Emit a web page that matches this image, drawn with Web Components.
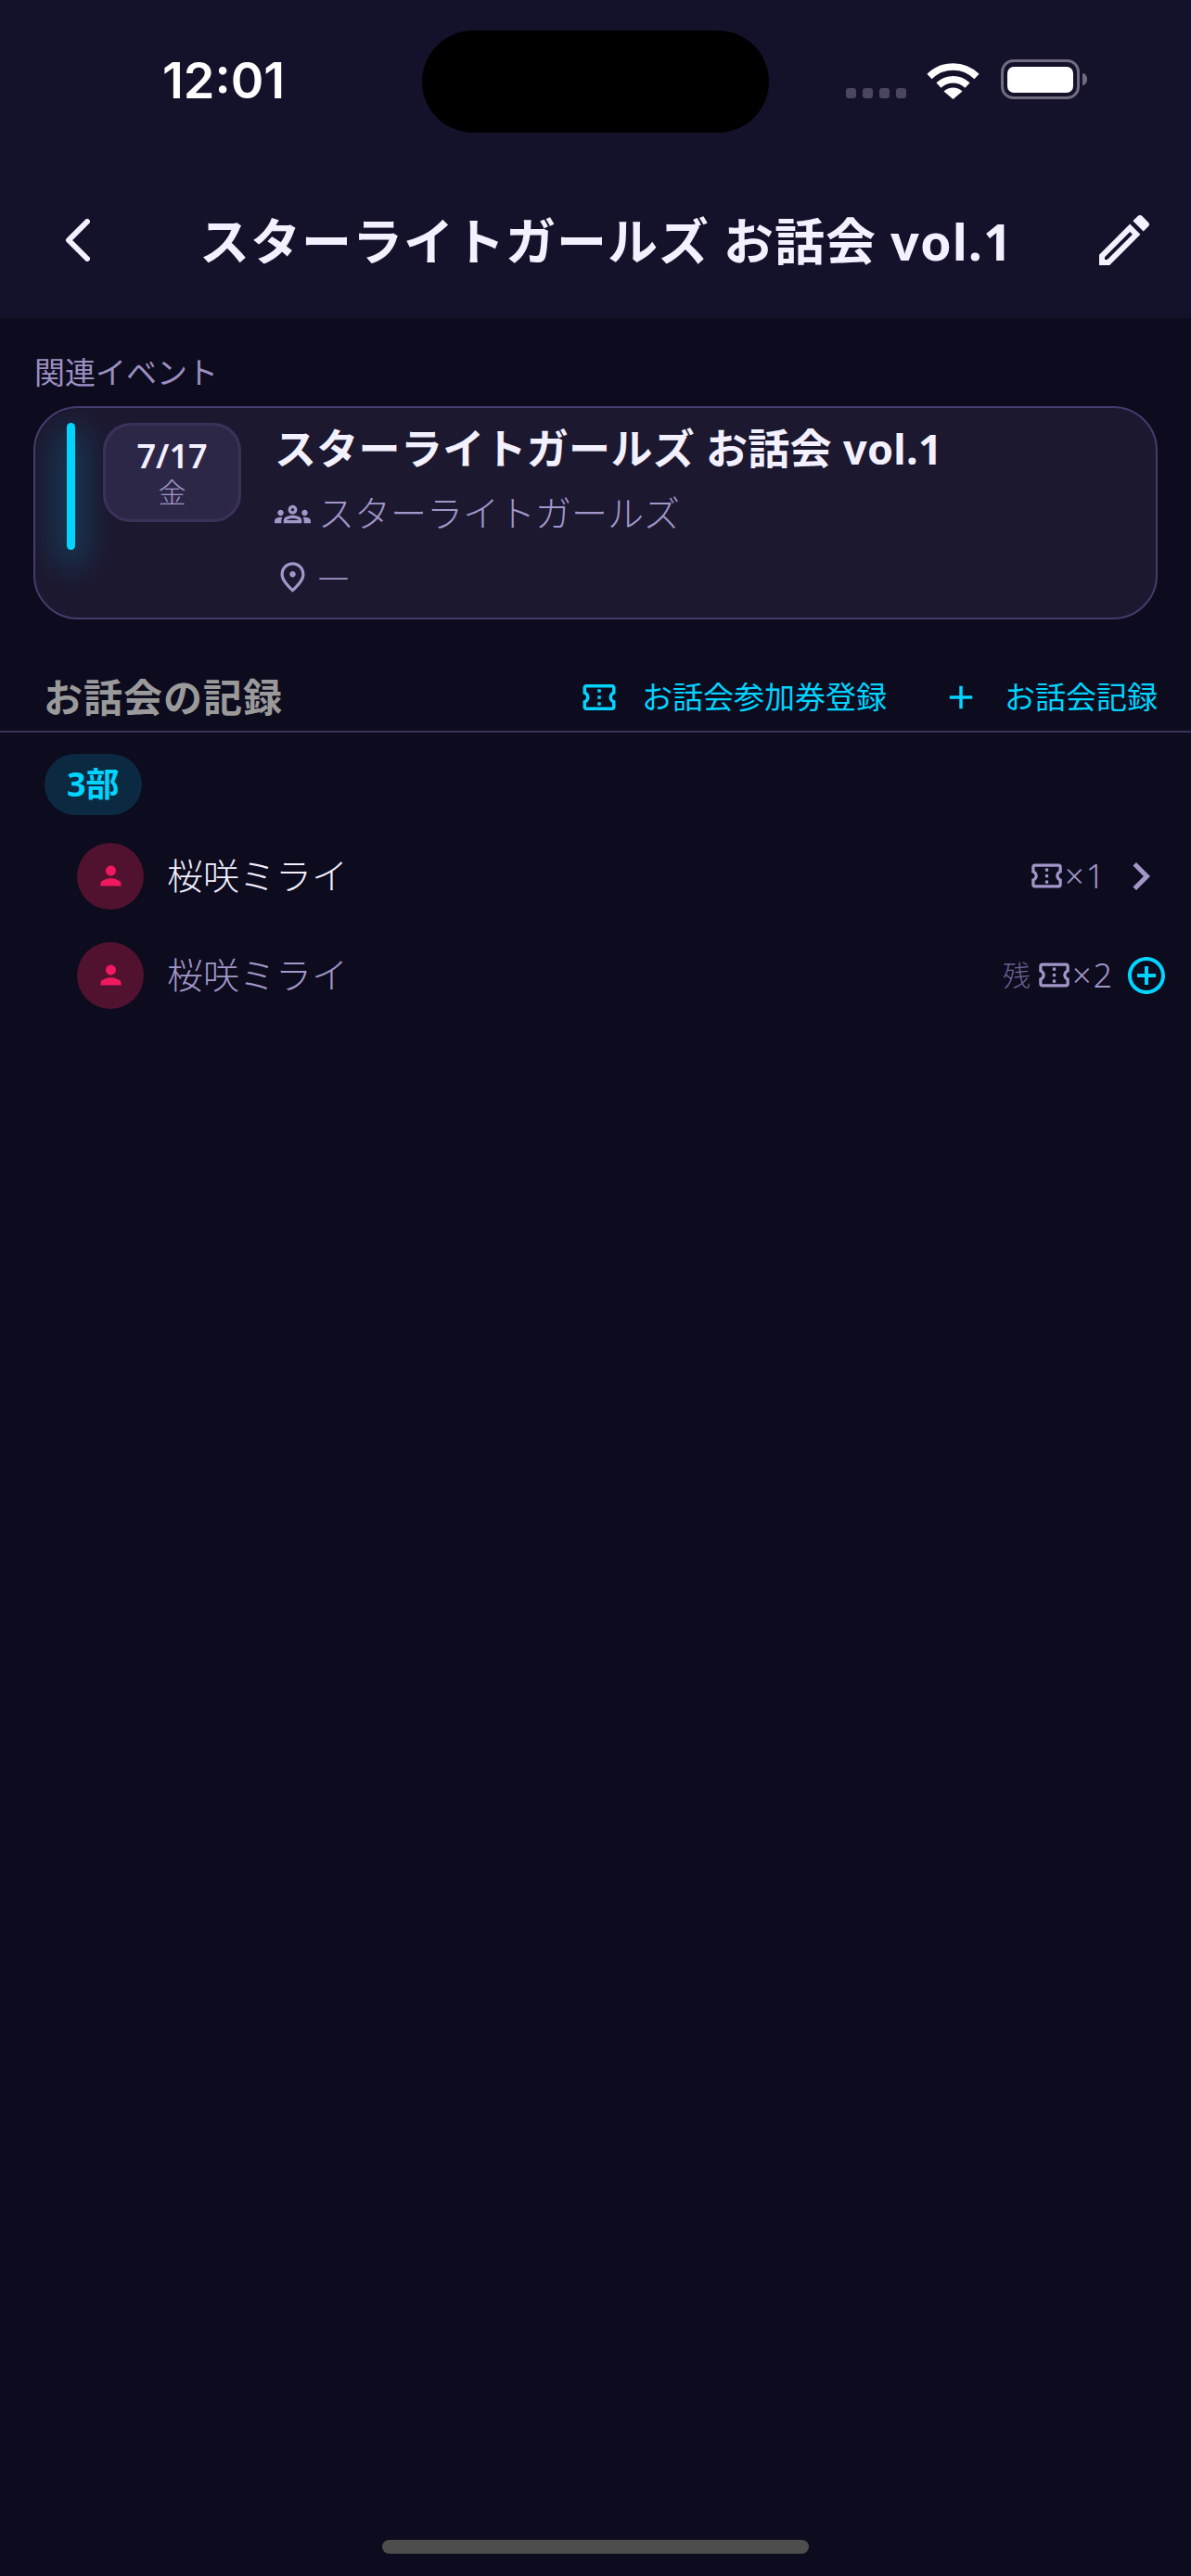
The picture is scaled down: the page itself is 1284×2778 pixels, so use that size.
<!DOCTYPE html>
<html lang="ja">
<head>
<meta charset="utf-8">
<title>スターライトガールズ お話会 vol.1</title>
<style>
    html, body
    {
        margin      : 0;
        padding     : 0;
        background  : #0d0b1e;
        font-family : "Noto Sans", "Noto Sans CJK JP", sans-serif;
    }
</style>
</head>
<body>

<screen-page>
    <status-bar time="12:01"></status-bar>
    <nav-header>スターライトガールズ お話会 vol.1</nav-header>

    <section-label>関連イベント</section-label>
    <event-card date="7/17" weekday="金">
        <span slot="title">スターライトガールズ お話会 vol.1</span>
        <span slot="artist">スターライトガールズ</span>
        <span slot="place">—</span>
    </event-card>

    <record-header heading="お話会の記録">
        <action-link icon="ticket" gap="25">お話会参加券登録</action-link>
        <action-link icon="add" gap="26" style="margin-left:59px">お話会記録</action-link>
    </record-header>

    <part-badge>3部</part-badge>
    <record-row name="桜咲ミライ" count="×1" mode="done"></record-row>
    <record-row name="桜咲ミライ" count="×2" mode="left"></record-row>

    <home-indicator></home-indicator>
</screen-page>

<script>
const ICONS =
{
    ticket : "M22 10V6c0-1.11-.9-2-2-2H4c-1.1 0-1.99.89-1.99 2v4c1.1 0 1.99.9 1.99 2s-.89 2-2 2v4c0 1.1.9 2 2 2h16c1.1 0 2-.9 2-2v-4c-1.1 0-2-.9-2-2s.9-2 2-2zm-2-1.46c-1.19.69-2 1.99-2 3.46s.81 2.77 2 3.46V18H4v-2.54c1.19-.69 2-1.99 2-3.46 0-1.48-.8-2.77-1.99-3.46L4 6h16v2.54zM11 15h2v2h-2zm0-4h2v2h-2zm0-4h2v2h-2z",
    add    : "M19 13h-6v6h-2v-6H5v-2h6V5h2v6h6v2z",
    edit   : "M14.06 9.02l.92.92L5.92 19H5v-.92l9.06-9.06M17.66 3c-.25 0-.51.1-.7.29l-1.83 1.83 3.75 3.75 1.83-1.83c.39-.39.39-1.02 0-1.41l-2.34-2.34c-.2-.2-.45-.29-.71-.29zm-3.6 3.19L3 17.25V21h3.75L17.81 9.94l-3.75-3.75z",
    person : "M12 12c2.21 0 4-1.79 4-4s-1.79-4-4-4-4 1.79-4 4 1.79 4 4 4zm0 2c-2.67 0-8 1.34-8 4v2h16v-2c0-2.66-5.33-4-8-4z",
    place  : "M12 12c-1.1 0-2-.9-2-2s.9-2 2-2 2 .9 2 2-.9 2-2 2zm6-1.8C18 6.57 15.35 4 12 4s-6 2.57-6 6.2c0 2.34 1.95 5.44 6 9.14 4.05-3.7 6-6.8 6-9.14zM12 2c4.2 0 8 3.22 8 8.2 0 3.32-2.67 7.25-8 11.8-5.33-4.55-8-8.48-8-11.8C4 5.22 7.8 2 12 2z",
    groups : "M4,13c1.1,0,2-0.9,2-2c0-1.1-0.9-2-2-2s-2,0.9-2,2C2,12.1,2.9,13,4,13z M5.13,14.1C4.76,14.04,4.39,14,4,14c-0.99,0-1.93,0.21-2.78,0.58C0.48,14.9,0,15.62,0,16.43V18l4.5,0v-1.61C4.5,15.56,4.73,14.78,5.13,14.1z M20,13c1.1,0,2-0.9,2-2c0-1.1-0.9-2-2-2s-2,0.9-2,2C18,12.1,18.9,13,20,13z M24,16.43c0-0.81-0.48-1.53-1.22-1.85C21.93,14.21,20.99,14,20,14c-0.39,0-0.76,0.04-1.13,0.1c0.4,0.68,0.63,1.46,0.63,2.29V18l4.5,0V16.43z M16.24,13.65c-1.17-0.52-2.61-0.9-4.24-0.9c-1.63,0-3.07,0.39-4.24,0.9C6.68,14.13,6,15.21,6,16.39V18h12v-1.61C18,15.21,17.32,14.13,16.24,13.65z M8.07,16c0.09-0.23,0.13-0.39,0.91-0.69c0.97-0.38,1.99-0.56,3.02-0.56s2.05,0.18,3.02,0.56c0.77,0.3,0.81,0.46,0.91,0.69H8.07z M12,8c0.55,0,1,0.45,1,1s-0.45,1-1,1s-1-0.45-1-1S11.45,8,12,8 M12,6c-1.66,0-3,1.34-3,3c0,1.66,1.34,3,3,3s3-1.34,3-3C15,7.34,13.66,6,12,6L12,6z",
    chevron: "M10 6L8.59 7.41 13.17 12l-4.58 4.59L10 18l6-6z",
    circle : "M13 7h-2v4H7v2h4v4h2v-4h4v-2h-4V7zm-1-5C6.48 2 2 6.48 2 12s4.48 10 10 10 10-4.48 10-10S17.52 2 12 2zm0 18c-4.41 0-8-3.59-8-8s3.59-8 8-8 8 3.59 8 8-3.59 8-8 8z"
};

class AppIcon extends HTMLElement
{
    connectedCallback()
    {
        const size = this.getAttribute("size") || 24;
        this.attachShadow({mode:"open"}).innerHTML =
        `
        <style>
            :host { display:block; flex:none; width:${size}px; height:${size}px; }
            svg   { display:block; width:100%; height:100%; fill:currentColor; }
        </style>
        <svg viewBox="0 0 24 24"><path d="${ICONS[this.getAttribute("name")]}"/></svg>`;
    }
}

class ScreenPage extends HTMLElement
{
    constructor()
    {
        super();
        this.attachShadow({mode:"open"}).innerHTML =
        `
        <style>
            :host
            {
                display        : flex;
                flex-direction : column;
                height         : 2778px;
                background     : #0d0b1e;
                overflow       : hidden;
            }
        </style>
        <slot></slot>`;
    }
}

class StatusBar extends HTMLElement
{
    connectedCallback()
    {
        this.attachShadow({mode:"open"}).innerHTML =
        `
        <style>
            :host
            {
                display               : grid;
                grid-template-columns : 455px 374px 1fr;
                height                : 174px;
                background            : #14112b;
                flex                  : none;
            }
            .time
            {
                padding-left : 175px;
                padding-top  : 54px;
                font         : 600 54px/66px Inter, sans-serif;
                color        : #ffffff;
            }
            .island
            {
                height        : 110px;
                margin-top    : 33px;
                background    : #000000;
                border-radius : 55px;
            }
            .right
            {
                display     : flex;
                align-items : flex-start;
                padding-left: 83px;
            }
            .dots
            {
                display     : flex;
                gap         : 7px;
                margin-top  : 95px;
            }
            .dots i
            {
                width         : 11px;
                height        : 11px;
                border-radius : 3px;
                background    : #4a4660;
            }
            .wifi    { margin:65px 0 0 22px; width:57px; height:42px; display:block; }
            .battery { margin:64px 0 0 23px; display:block; width:93px; height:44px; }
        </style>
        <div class="time">${this.getAttribute("time")}</div>
        <div class="island"></div>
        <div class="right">
            <div class="dots"><i></i><i></i><i></i><i></i></div>
            <svg class="wifi" viewBox="0 0 57 42" fill="none" stroke="#fff">
                <path d="M3 17.5C17.5 3.5 39.5 3.5 54 17.5" stroke-width="7.5"/>
                <path d="M13 27C22 18.5 35 18.5 44 27" stroke-width="7.5"/>
                <path d="M18.5 33.5C24 28 33 28 38.5 33.5L28.5 42Z" fill="#fff" stroke="none"/>
            </svg>
            <svg class="battery" viewBox="0 0 93 44">
                <rect x="1.500" y="1.500" width="82" height="40" rx="12" fill="none" stroke="#6f6c80" stroke-width="3"/>
                <rect x="7" y="8" width="71" height="28" rx="7" fill="#fff"/>
                <path d="M88 15c3 0 5 3 5 6.500s-2 6.500-5 6.500z" fill="#6f6c80"/>
            </svg>
        </div>`;
    }
}

class NavHeader extends HTMLElement
{
    constructor()
    {
        super();
        this.attachShadow({mode:"open"}).innerHTML =
        `
        <style>
            :host
            {
                display     : flex;
                align-items : center;
                height      : 169px;
                background  : #14112b;
                color       : #f3f0ff;
                flex        : none;
            }
            .back  { width:27px; height:46px; margin-left:70px; display:block; }
            .title
            {
                margin-left    : 118px;
                padding-top    : 2px;
                font-size      : 54px;
                font-weight    : 700;
                letter-spacing : 1px;
                line-height    : 70px;
                white-space    : nowrap;
            }
            app-icon { margin-left:auto; margin-right:36px; }
        </style>
        <svg class="back" viewBox="0 0 27 46" fill="none" stroke="currentColor" stroke-width="6" stroke-linecap="round" stroke-linejoin="round">
            <path d="M24 3L4 23l20 20" />
        </svg>
        <div class="title"><slot></slot></div>
        <app-icon name="edit" size="72"></app-icon>`;
    }
}

class SectionLabel extends HTMLElement
{
    constructor()
    {
        super();
        this.attachShadow({mode:"open"}).innerHTML =
        `
        <style>
            :host
            {
                display     : block;
                margin      : 37px 0 14px 37px;
                font-size   : 33px;
                line-height : 44px;
                font-weight : 400;
                color       : #9b8fc0;
            }
        </style>
        <slot></slot>`;
    }
}

class EventCard extends HTMLElement
{
    connectedCallback()
    {
        this.attachShadow({mode:"open"}).innerHTML =
        `
        <style>
            :host
            {
                display       : flex;
                align-items   : flex-start;
                box-sizing    : border-box;
                height        : 230px;
                margin        : 0 36px;
                padding       : 16px 0 0 34px;
                background    : #1c1830;
                border        : 2px solid #463c6c;
                border-radius : 48px;
                overflow      : hidden;
                flex          : none;
            }
            .stripe
            {
                flex          : none;
                width         : 9px;
                height        : 137px;
                border-radius : 5px;
                background    : #00d4ff;
                box-shadow    : 0 12px 36px 6px rgba(0,212,255,.3);
            }
            .date
            {
                flex            : none;
                box-sizing      : border-box;
                width           : 149px;
                height          : 107px;
                margin-left     : 30px;
                display         : flex;
                flex-direction  : column;
                align-items     : center;
                justify-content : center;
                background      : #2d2747;
                border          : 3px solid #3a3258;
                border-radius   : 30px;
            }
            .day     { font-size:36px; font-weight:600; line-height:42px; color:#f3f0ff; }
            .weekday { font-size:30px; font-weight:300; line-height:36px; color:#a297c8; }
            .info    { margin:-2px 0 0 36px; min-width:0; }
            .title
            {
                font-size      : 45px;
                font-weight    : 700;
                letter-spacing : .3px;
                line-height    : 60px;
                color          : #f3f0ff;
                white-space    : nowrap;
            }
            .meta
            {
                display     : flex;
                align-items : center;
                gap         : 8px;
                height      : 50px;
                color       : #a297c8;
                font-size   : 39px;
                font-weight : 300;
                line-height : 50px;
                white-space : nowrap;
            }
            .meta span { margin-bottom:3px; }
            .artist { margin-top:15px; }
            .place  { margin-top:18px; font-size:33px; }
        </style>
        <div class="stripe"></div>
        <div class="date">
            <div class="day">${this.getAttribute("date")}</div>
            <div class="weekday">${this.getAttribute("weekday")}</div>
        </div>
        <div class="info">
            <div class="title"><slot name="title"></slot></div>
            <div class="meta artist"><app-icon name="groups" size="39"></app-icon><span><slot name="artist"></slot></span></div>
            <div class="meta place"><app-icon name="place" size="39"></app-icon><span><slot name="place"></slot></span></div>
        </div>`;
    }
}

class RecordHeader extends HTMLElement
{
    connectedCallback()
    {
        this.attachShadow({mode:"open"}).innerHTML =
        `
        <style>
            :host
            {
                display       : flex;
                align-items   : center;
                height        : 60px;
                margin-top    : 52px;
                padding       : 2px 36px 6px 47px;
                border-bottom : 2px solid #3a3258;
                flex          : none;
            }
            h2
            {
                margin         : 0;
                font-size      : 42px;
                font-weight    : 700;
                letter-spacing : 1px;
                line-height    : 60px;
                color          : #9a9a9a;
            }
            .actions { display:flex; align-items:center; margin-left:auto; }
        </style>
        <h2>${this.getAttribute("heading")}</h2>
        <div class="actions"><slot></slot></div>`;
    }
}

class ActionLink extends HTMLElement
{
    connectedCallback()
    {
        this.attachShadow({mode:"open"}).innerHTML =
        `
        <style>
            :host
            {
                display     : flex;
                align-items : center;
                gap         : ${this.getAttribute("gap")}px;
                font-size   : 33px;
                line-height : 44px;
                color       : #00d4ff;
                white-space : nowrap;
            }
        </style>
        <app-icon name="${this.getAttribute("icon")}" size="42"></app-icon>
        <slot></slot>`;
    }
}

class PartBadge extends HTMLElement
{
    constructor()
    {
        super();
        this.attachShadow({mode:"open"}).innerHTML =
        `
        <style>
            :host
            {
                display       : block;
                align-self    : flex-start;
                box-sizing    : border-box;
                height        : 66px;
                margin        : 23px 0 12px 48px;
                padding       : 0 24px;
                background    : #0b2a42;
                border-radius : 33px;
                color         : #00d4ff;
                font-size     : 36px;
                font-weight   : 700;
                line-height   : 66px;
                flex          : none;
            }
        </style>
        <slot></slot>`;
    }
}

class RecordRow extends HTMLElement
{
    connectedCallback()
    {
        const left = this.getAttribute("mode") == "left";
        this.attachShadow({mode:"open"}).innerHTML =
        `
        <style>
            :host
            {
                display     : flex;
                align-items : center;
                height      : 107px;
                padding     : 0 24px 0 83px;
                flex        : none;
            }
            .avatar
            {
                flex            : none;
                width           : 72px;
                height          : 72px;
                border-radius   : 50%;
                background      : #50122f;
                color           : #f0185f;
                display         : flex;
                align-items     : center;
                justify-content : center;
            }
            .name
            {
                margin      : 0 0 2px 25px;
                font-size   : 39px;
                font-weight : 300;
                line-height : 50px;
                color       : ${left ? "#a297c8" : "#f3f0ff"};
            }
            .right
            {
                margin-left : auto;
                display     : flex;
                align-items : center;
                color       : #a297c8;
                font-size   : 36px;
                font-weight : 300;
                line-height : 44px;
            }
            .rest  { font-size:30px; color:#6b6290; margin-right:6px; }
            .count { margin:0 ${left ? 11 : 7}px 0 0; letter-spacing:2px; }
            .plus  { color:#00d4ff; }
        </style>
        <div class="avatar"><app-icon name="person" size="33"></app-icon></div>
        <div class="name">${this.getAttribute("name")}</div>
        <div class="right">
            ${left ? `<span class="rest">残</span>` : ""}
            <app-icon name="ticket" size="39"></app-icon>
            <span class="count">${this.getAttribute("count")}</span>
            ${left
                ? `<app-icon class="plus" name="circle" size="48"></app-icon>`
                : `<app-icon name="chevron" size="60"></app-icon>`}
        </div>`;
    }
}

class HomeIndicator extends HTMLElement
{
    constructor()
    {
        super();
        this.attachShadow({mode:"open"}).innerHTML =
        `
        <style>
            :host
            {
                display       : block;
                width         : 460px;
                height        : 15px;
                margin        : auto auto 24px;
                border-radius : 8px;
                background    : #4d4d4d;
                flex          : none;
            }
        </style>`;
    }
}

customElements.define("app-icon",AppIcon);
customElements.define("screen-page",ScreenPage);
customElements.define("status-bar",StatusBar);
customElements.define("nav-header",NavHeader);
customElements.define("section-label",SectionLabel);
customElements.define("event-card",EventCard);
customElements.define("record-header",RecordHeader);
customElements.define("action-link",ActionLink);
customElements.define("part-badge",PartBadge);
customElements.define("record-row",RecordRow);
customElements.define("home-indicator",HomeIndicator);
</script>
</body>
</html>
